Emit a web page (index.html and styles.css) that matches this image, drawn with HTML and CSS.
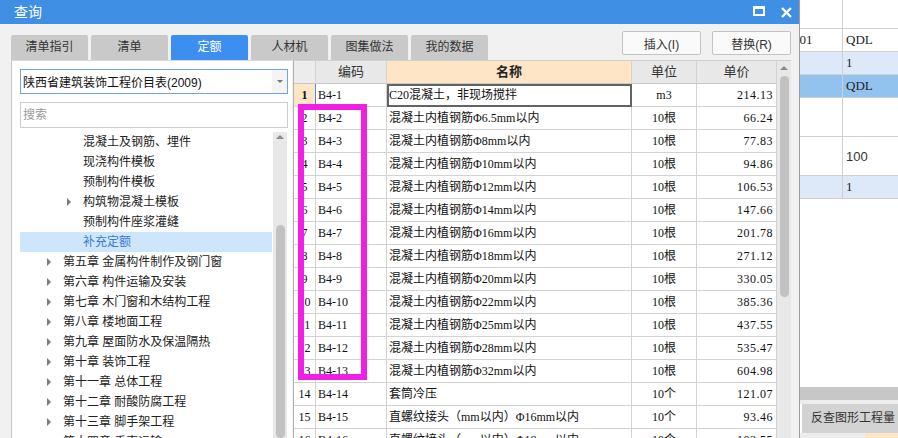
FILE: index.html
```html
<!DOCTYPE html>
<html lang="zh-CN">
<head>
<meta charset="utf-8">
<title>查询</title>
<link rel="stylesheet" href="styles.css">
</head>
<body>
<div class="screen">
  <section class="dialog">
    <header class="titlebar">
      <span class="title">查询</span>
      <div class="win-btns">
        <svg class="ico-max" width="12" height="10" viewBox="0 0 12 10"><rect x="1" y="1" width="10" height="8" fill="none" stroke="#fff" stroke-width="2"/><rect x="0" y="0" width="12" height="3" fill="#fff"/></svg>
        <svg class="ico-close" width="11" height="11" viewBox="0 0 11 11"><path d="M1 1L10 10M10 1L1 10" stroke="#fff" stroke-width="2.4"/></svg>
      </div>
    </header>

    <div class="toolbar">
      <nav class="tabs">
        <span class="tab">清单指引</span>
        <span class="tab">清单</span>
        <span class="tab active">定额</span>
        <span class="tab">人材机</span>
        <span class="tab">图集做法</span>
        <span class="tab">我的数据</span>
      </nav>
      <div class="actions">
        <button class="btn">插入(I)</button>
        <button class="btn">替换(R)</button>
      </div>
    </div>

    <div class="body">
      <aside class="left">
        <div class="select"><span class="select-text">陕西省建筑装饰工程价目表(2009)</span><span class="select-btn"><i class="caret"></i></span></div>
        <div class="search">搜索</div>
        <div class="tree-wrap">
          <ul class="tree">
            <li class="l2">混凝土及钢筋、埋件</li>
            <li class="l2">现浇构件模板</li>
            <li class="l2">预制构件模板</li>
            <li class="l2 kids"><span class="arr"></span>构筑物混凝土模板</li>
            <li class="l2">预制构件座浆灌缝</li>
            <li class="l2 sel">补充定额</li>
            <li class="l1"><span class="arr"></span>第五章 金属构件制作及钢门窗</li>
            <li class="l1"><span class="arr"></span>第六章 构件运输及安装</li>
            <li class="l1"><span class="arr"></span>第七章 木门窗和木结构工程</li>
            <li class="l1"><span class="arr"></span>第八章 楼地面工程</li>
            <li class="l1"><span class="arr"></span>第九章 屋面防水及保温隔热</li>
            <li class="l1"><span class="arr"></span>第十章 装饰工程</li>
            <li class="l1"><span class="arr"></span>第十一章 总体工程</li>
            <li class="l1"><span class="arr"></span>第十二章 耐酸防腐工程</li>
            <li class="l1"><span class="arr"></span>第十三章 脚手架工程</li>
            <li class="l1"><span class="arr"></span>第十四章 垂直运输</li>
          </ul>
          <div class="vscroll tree-scroll"><i class="up"></i><i class="thumb"></i></div>
        </div>
      </aside>

      <div class="grid-wrap">
        <div class="grid">
          <div class="c h rn"></div><div class="c h">编码</div><div class="c h hl">名称</div><div class="c h">单位</div><div class="c h">单价</div>

          <div class="c rn cur">1</div><div class="c code">B4-1</div><div class="c name focus">C20混凝土，非现场搅拌</div><div class="c unit">m3</div><div class="c price">214.13</div>
          <div class="c rn">2</div><div class="c code">B4-2</div><div class="c name">混凝土内植钢筋Φ6.5mm以内</div><div class="c unit">10根</div><div class="c price">66.24</div>
          <div class="c rn">3</div><div class="c code">B4-3</div><div class="c name">混凝土内植钢筋Φ8mm以内</div><div class="c unit">10根</div><div class="c price">77.83</div>
          <div class="c rn">4</div><div class="c code">B4-4</div><div class="c name">混凝土内植钢筋Φ10mm以内</div><div class="c unit">10根</div><div class="c price">94.86</div>
          <div class="c rn">5</div><div class="c code">B4-5</div><div class="c name">混凝土内植钢筋Φ12mm以内</div><div class="c unit">10根</div><div class="c price">106.53</div>
          <div class="c rn">6</div><div class="c code">B4-6</div><div class="c name">混凝土内植钢筋Φ14mm以内</div><div class="c unit">10根</div><div class="c price">147.66</div>
          <div class="c rn">7</div><div class="c code">B4-7</div><div class="c name">混凝土内植钢筋Φ16mm以内</div><div class="c unit">10根</div><div class="c price">201.78</div>
          <div class="c rn">8</div><div class="c code">B4-8</div><div class="c name">混凝土内植钢筋Φ18mm以内</div><div class="c unit">10根</div><div class="c price">271.12</div>
          <div class="c rn">9</div><div class="c code">B4-9</div><div class="c name">混凝土内植钢筋Φ20mm以内</div><div class="c unit">10根</div><div class="c price">330.05</div>
          <div class="c rn">10</div><div class="c code">B4-10</div><div class="c name">混凝土内植钢筋Φ22mm以内</div><div class="c unit">10根</div><div class="c price">385.36</div>
          <div class="c rn">11</div><div class="c code">B4-11</div><div class="c name">混凝土内植钢筋Φ25mm以内</div><div class="c unit">10根</div><div class="c price">437.55</div>
          <div class="c rn">12</div><div class="c code">B4-12</div><div class="c name">混凝土内植钢筋Φ28mm以内</div><div class="c unit">10根</div><div class="c price">535.47</div>
          <div class="c rn">13</div><div class="c code">B4-13</div><div class="c name">混凝土内植钢筋Φ32mm以内</div><div class="c unit">10根</div><div class="c price">604.98</div>
          <div class="c rn">14</div><div class="c code">B4-14</div><div class="c name">套筒冷压</div><div class="c unit">10个</div><div class="c price">121.07</div>
          <div class="c rn">15</div><div class="c code">B4-15</div><div class="c name">直螺纹接头（mm以内）Φ16mm以内</div><div class="c unit">10个</div><div class="c price">93.46</div>
          <div class="c rn">16</div><div class="c code">B4-16</div><div class="c name">直螺纹接头（mm以内）Φ18mm以内</div><div class="c unit">10个</div><div class="c price">103.55</div>
        </div>
        <div class="vscroll grid-scroll"><i class="up"></i><i class="thumb"></i></div>
        <div class="mark"></div>
      </div>
    </div>
  </section>

  <section class="sheet">
    <div class="srow r0"><div class="s1"></div><div class="s2"></div></div>
    <div class="srow r1"><div class="s1 cut">001</div><div class="s2">QDL</div></div>
    <div class="srow r2 lb"><div class="s1"></div><div class="s2">1</div></div>
    <div class="srow r3 mb"><div class="s1"></div><div class="s2">QDL</div></div>
    <div class="srow r4"><div class="s1"></div><div class="s2"></div></div>
    <div class="srow r5"><div class="s1"></div><div class="s2 sans">100</div></div>
    <div class="srow r6 lb"><div class="s1"></div><div class="s2">1</div></div>
    <div class="sfill"></div>
    <div class="sband"></div>
    <div class="sgap"></div>
    <div class="sbtn">反查图形工程量</div>
    <div class="sfoot"><span class="peach"></span></div>
  </section>
</div>
</body>
</html>
```

FILE: styles.css
```css
* { box-sizing: border-box; }
html, body { margin: 0; padding: 0; }
body {
  width: 898px;
  height: 438px;
  overflow: hidden;
  background: #fff;
  font-family: "Liberation Sans", "Noto Sans CJK SC", sans-serif;
  font-size: 12px;
  color: #222;
}
ul { margin: 0; padding: 0; list-style: none; }

.screen { display: flex; width: 898px; height: 438px; }

/* ---------- dialog ---------- */
.dialog {
  width: 800px;
  height: 438px;
  flex: none;
  display: flex;
  flex-direction: column;
  background: #f1f1f1;
  border-right: 1px solid #9c9c9c;
}
.titlebar {
  height: 24px;
  flex: none;
  display: flex;
  align-items: center;
  background: #3f8fe5;
  color: #fff;
  padding-left: 14px;
}
.title { font-size: 14px; line-height: 24px; }
.win-btns { margin-left: auto; display: flex; align-items: center; gap: 16px; padding-right: 7px; }
.ico-max { display: block; margin-top: -2px; }
.ico-close { display: block; }

.toolbar { height: 36px; flex: none; display: flex; }
.tabs { display: flex; gap: 3px; padding-left: 11px; align-self: flex-end; }
.tab {
  width: 77px;
  height: 25px;
  line-height: 25px;
  text-align: center;
  background: #c9c9c9;
  color: #333;
  font-size: 12px;
  border-radius: 2px 2px 0 0;
}
.tab.active { background: #3c8ff0; color: #fff; }
.actions { margin-left: auto; display: flex; gap: 11px; padding: 7px 8px 0 0; }
.btn {
  width: 79px;
  height: 24px;
  margin: 0;
  padding: 0;
  border: 1px solid #c3c3c3;
  border-radius: 2px;
  background: #fafafa;
  color: #333;
  font: 12px "Liberation Sans", "Noto Sans CJK SC", sans-serif;
}

.body { flex: 1; display: flex; min-height: 0; }

/* ---------- left panel ---------- */
.left {
  width: 281px;
  margin-left: 11px;
  flex: none;
  display: flex;
  flex-direction: column;
  background: #fff;
  border-left: 1px solid #c8c8c8;
  border-top: 1px solid #dadada;
}
.select {
  margin: 8px 4px 0 8px;
  height: 25px;
  display: flex;
  align-items: center;
  border: 1px solid #6fa6e0;
  background: #fff;
}
.select-text { padding-left: 2px; flex: 1; font-size: 12px; color: #111; white-space: nowrap; }
.select-btn { width: 15px; height: 100%; display: flex; align-items: center; justify-content: center; background: #f4f4f4; }
.caret { width: 0; height: 0; border-left: 3px solid transparent; border-right: 3px solid transparent; border-top: 3px solid #777; }
.search {
  margin: 8px 4px 0 8px;
  height: 26px;
  line-height: 24px;
  padding-left: 2px;
  border: 1px solid #cdcdcd;
  color: #999;
  font-size: 12px;
}
.tree-wrap { flex: 1; min-height: 0; display: flex; margin-top: 4px; overflow: hidden; }
.tree { width: 252px; margin-left: 8px; flex: none; }
.tree li {
  height: 20px;
  line-height: 20px;
  display: flex;
  align-items: center;
  white-space: nowrap;
  font-size: 12px;
  color: #222;
}
.tree li.l2 { padding-left: 63px; }
.tree li.l2.kids { padding-left: 47px; }
.tree li.l1 { padding-left: 27px; }
.tree li.sel { background: #cde6fb; color: #3a7bd0; }
.arr { width: 16px; flex: none; height: 8px; }
.arr::before {
  content: "";
  display: block;
  width: 0; height: 0;
  border-left: 4px solid #7a7a7a;
  border-top: 4px solid transparent;
  border-bottom: 4px solid transparent;
}

.vscroll {
  width: 14px;
  flex: none;
  background: #e8e8e8;
  display: flex;
  flex-direction: column;
  align-items: center;
}
.vscroll .up {
  display: block;
  width: 0; height: 0;
  border-left: 4px solid transparent;
  border-right: 4px solid transparent;
  border-bottom: 4px solid #8a8a8a;
}
.vscroll .thumb { display: block; width: 9px; background: #c2c2c2; border-radius: 5px; }
.tree-scroll { margin-left: 1px; padding-top: 3px; }
.tree-scroll .thumb { margin-top: 86px; height: 260px; }

/* ---------- grid ---------- */
.grid-wrap {
  position: relative;
  margin-left: 1px;
  width: 498px;
  flex: none;
  display: flex;
  overflow: hidden;
  border-left: 1px solid #b0b0b0;
  border-top: 1px solid #cfcfcf;
  background: #fff;
}
.grid {
  display: grid;
  grid-template-columns: 22px 71px 245px 65px 80px;
  grid-auto-rows: 23px;
  width: 483px;
  flex: none;
  align-content: start;
  font-family: "Liberation Serif", "Noto Sans CJK SC", serif;
  font-size: 12px;
  color: #111;
}
.c {
  border-right: 1px solid #d3d3d3;
  border-bottom: 1px solid #d3d3d3;
  line-height: 22px;
  white-space: nowrap;
  overflow: hidden;
  padding: 0 2px;
}
.c.h {
  background: #e8e8e8;
  text-align: center;
  font-family: "Liberation Sans", "Noto Sans CJK SC", sans-serif;
  font-size: 13px;
  color: #333;
  border-bottom-color: #c8c8c8;
}
.c.h.hl { background: #fde5c6; font-weight: bold; color: #222; }
.c.rn { text-align: center; padding: 0; }
.c.h.rn { background: #ececec; }
.c.rn.cur { background: #fde5c6; font-weight: bold; border-right-color: #4a8fe0; }
.c.unit { text-align: center; }
.c.price { text-align: right; padding-right: 3px; letter-spacing: 0.5px; }
.c.focus { outline: 2px solid #636363; outline-offset: -2px; }

.grid-scroll { padding-top: 5px; }
.grid-scroll .thumb { margin-top: 6px; height: 221px; }

.mark {
  position: absolute;
  left: 4px;
  top: 43px;
  width: 69px;
  height: 276px;
  border: 6px solid #f01fe6;
}

/* ---------- background sheet ---------- */
.sheet {
  flex: 1;
  display: flex;
  flex-direction: column;
  background: #fff;
  font-family: "Liberation Serif", "Noto Sans CJK SC", serif;
  font-size: 13px;
  color: #222;
  overflow: hidden;
}
.srow { display: flex; flex: none; border-bottom: 1px solid #d0d0d0; }
.s1 { width: 43px; flex: none; border-right: 1px solid #d0d0d0; overflow: hidden; white-space: nowrap; }
.s2 { flex: 1; padding-left: 3px; white-space: nowrap; display: flex; align-items: center; }
.s1.cut { text-indent: -7px; display: flex; align-items: center; }
.s2.sans { font-family: "Liberation Sans", sans-serif; font-size: 13px; color: #333; }
.r0 { height: 29px; }
.r1, .r2, .r3, .r6 { height: 23px; }
.r4, .r5 { height: 39px; }
.lb { background: #dde9f9; }
.mb { background: #92c3ef; }
.sfill { flex: 1; }
.sband { height: 13px; flex: none; background: #c7c7c7; }
.sgap { height: 4px; flex: none; background: #ededed; }
.sbtn {
  height: 29px;
  flex: none;
  margin-left: 2px;
  background: #d3d3d3;
  padding-left: 9px;
  line-height: 29px;
  font-family: "Liberation Sans", "Noto Sans CJK SC", sans-serif;
  font-size: 12px;
  color: #333;
  white-space: nowrap;
}
.sfoot { height: 5px; flex: none; display: flex; justify-content: flex-end; background: #ededed; }
.peach { width: 33px; background: #fde5c6; }
```
